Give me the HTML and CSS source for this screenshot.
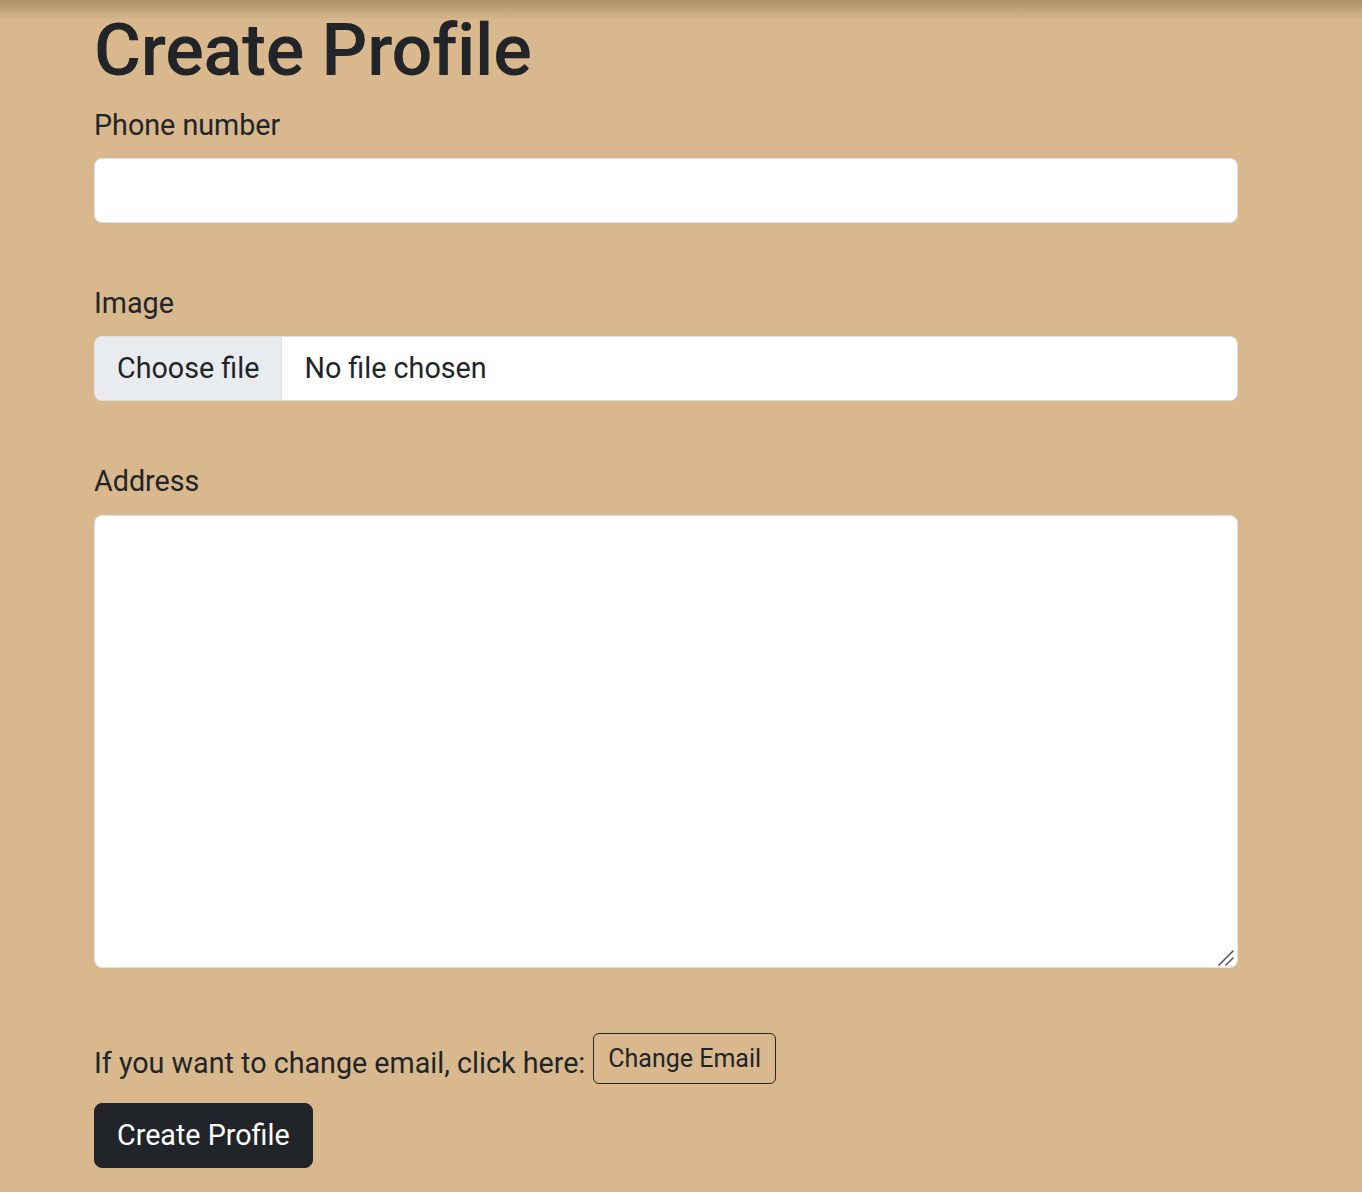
FILE: index.html
```html
<!DOCTYPE html>
<html lang="en">
<head>
<meta charset="utf-8">
<title>Create Profile</title>
<link rel="stylesheet" href="styles.css">
</head>
<body>
<div class="topshade"></div>
<main class="container">
  <h1 class="title">Create Profile</h1>
  <form class="form">
    <div class="field">
      <label class="label" for="phone">Phone number</label>
      <input class="control" id="phone" type="text">
    </div>
    <div class="field">
      <span class="label">Image</span>
      <label class="file">
        <span class="file-btn">Choose file</span>
        <span class="file-name">No file chosen</span>
      </label>
    </div>
    <div class="field field-last">
      <label class="label" for="address">Address</label>
      <div class="area-wrap">
        <textarea class="control area" id="address"></textarea>
        <svg class="grip" width="18" height="18" viewBox="0 0 18 18" aria-hidden="true">
          <path d="M2 16 L16 2" stroke="#555" stroke-width="1.6" stroke-linecap="round"/>
          <path d="M9 16 L16 9" stroke="#555" stroke-width="1.6" stroke-linecap="round"/>
        </svg>
      </div>
    </div>
    <div class="email-row">
      <span class="email-text">If you want to change email, click here:</span>
      <button type="button" class="btn-outline">Change Email</button>
    </div>
    <button type="button" class="btn-dark">Create Profile</button>
  </form>
</main>
</body>
</html>
```
FILE: styles.css
```css
* { box-sizing: border-box; }
html, body { margin: 0; padding: 0; }
body {
  background: #d8b88c;
  color: #212529;
  font-family: Roboto, "Liberation Sans", Arial, sans-serif;
  font-size: 28.7px;
  line-height: 1.5;
  min-height: 1192px;
}
.topshade {
  position: fixed;
  top: 0; left: 0; right: 0;
  height: 20px;
  background: linear-gradient(rgba(120, 95, 60, 0.45), rgba(216, 184, 140, 0));
  pointer-events: none;
}
.container {
  width: 1144px;
  margin-left: 94px;
}
.title {
  font-size: 72px;
  font-weight: 500;
  line-height: 1.2;
  margin: 8px 0 10px;
  letter-spacing: -0.3px;
}
.form { display: flex; flex-direction: column; align-items: flex-start; }
.field { width: 100%; display: flex; flex-direction: column; margin-bottom: 59px; }
.field-last { margin-bottom: 65px; }
.label { display: block; margin-bottom: 11px; }
.control {
  display: block;
  width: 100%;
  height: 65px;
  padding: 10px 22px;
  font: inherit;
  color: #212529;
  background: #fff;
  border: 1px solid #dee2e6;
  border-radius: 8px;
  outline: none;
}
.area-wrap { position: relative; width: 100%; }
.area { height: 453px; resize: none; }
.grip {
  position: absolute;
  right: 3px;
  bottom: 1px;
}
.file {
  display: flex;
  width: 100%;
  height: 65px;
  background: #fff;
  border: 1px solid #dee2e6;
  border-radius: 8px;
  overflow: hidden;
}
.file-btn {
  display: flex;
  align-items: center;
  padding: 0 22px;
  background: #e9ecef;
  border-right: 1px solid #dee2e6;
}
.file-name {
  display: flex;
  align-items: center;
  padding-left: 22px;
}
.email-row {
  display: flex;
  align-items: flex-end;
  gap: 8px;
}
.btn-outline {
  font-family: inherit;
  font-size: 25px;
  line-height: 1.5;
  color: #212529;
  background: transparent;
  border: 1px solid #212529;
  border-radius: 6px;
  padding: 6px 14px;
  margin-bottom: 1px;
}
.btn-dark {
  margin-top: 18px;
  font-family: inherit;
  font-size: 28.7px;
  line-height: 1.5;
  color: #fff;
  background: #212529;
  border: 1px solid #212529;
  border-radius: 8px;
  padding: 10px 22px;
}
```
